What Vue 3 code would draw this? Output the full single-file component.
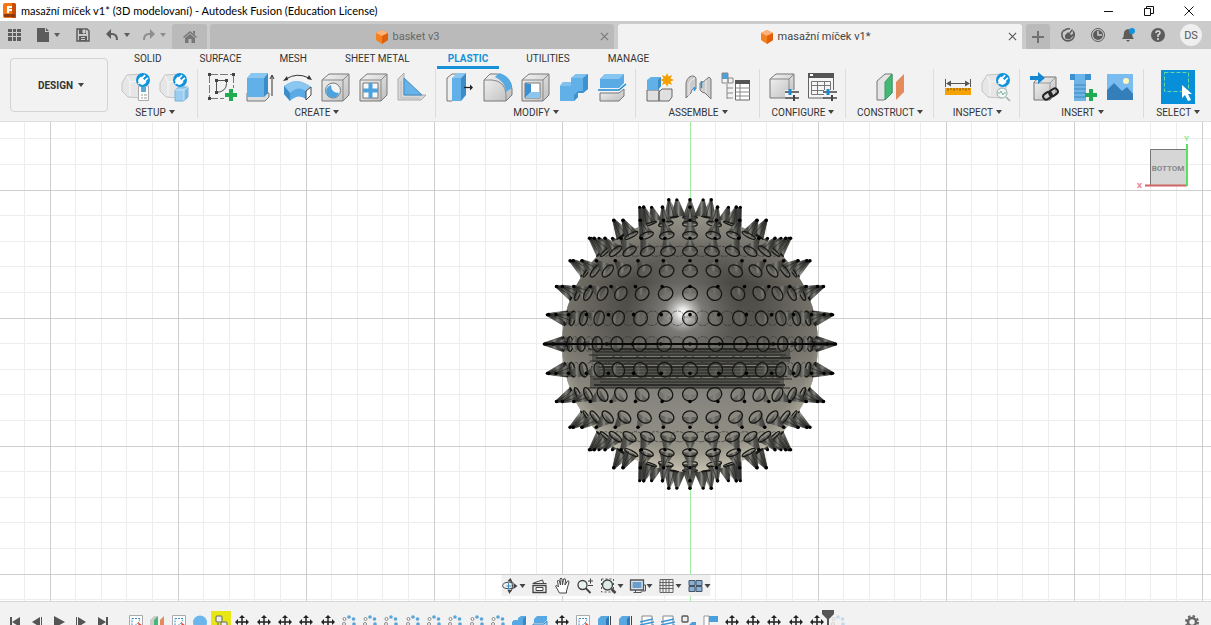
<script setup>
const ribbonTabs = ['SOLID', 'SURFACE', 'MESH', 'SHEET METAL', 'PLASTIC', 'UTILITIES', 'MANAGE']

const groups = [
  { label: 'SETUP', tools: ['setup-doc', 'setup-cube'] },
  { label: 'CREATE', tools: ['sketch', 'extrude', 'sweep', 'hole', 'lattice', 'rib'] },
  { label: 'MODIFY', tools: ['press', 'fillet', 'shell', 'combine', 'split'] },
  { label: 'ASSEMBLE', tools: ['component', 'joint', 'table-tree'] },
  { label: 'CONFIGURE', tools: ['config', 'config-table'] },
  { label: 'CONSTRUCT', tools: ['planes'] },
  { label: 'INSPECT', tools: ['ruler', 'analyse'] },
  { label: 'INSERT', tools: ['derive', 'bolt', 'image'] },
  { label: 'SELECT', tools: ['select'] },
]

const navTools = [
  { id: 'orbit', menu: true },
  { id: 'look' },
  { id: 'pan' },
  { id: 'zoom' },
  { id: 'fit', menu: true },
  { id: 'display', menu: true },
  { id: 'grid', menu: true },
  { id: 'views', menu: true },
]

const player = ['first', 'prev', 'play', 'next', 'last']
const timeline = [
  't-sketch', 't-planes', 't-sketch', 't-sphere', 't-joint',
  ...Array(5).fill('t-move'),
  ...Array(8).fill('t-pattern'),
  't-combine', 't-split', 't-move', 't-sketch', 't-extrude', 't-extrude',
  't-thread', 't-thread', 't-link', 't-flag',
  ...Array(5).fill('t-move'),
]

// Canvas grid, centred on the green axis
const CX = 690
const CY = 344
const vLines = []
const hLines = []
for (let k = -40; k <= 40; k++) {
  vLines.push({ p: Math.floor(CX + k * 25.6) + 0.5, major: k % 5 === 0 })
  hLines.push({ p: Math.floor(318 + k * 25.6) + 0.5, major: k % 5 === 0 })
}

// Spiky ball: rings of cones at equal latitude steps
const R = 128
const TIP = 146
const BASE = 7.4
const STEP = (11.6 * Math.PI) / 180
const perRing = [31, 31, 30, 28, 25, 18, 11, 5]
const spikes = []
for (let ring = -7; ring <= 7; ring++) {
  const n = perRing[Math.abs(ring)]
  const lat = ring * STEP
  for (let i = 0; i < n; i++) {
    const lon = (i * 2 * Math.PI) / n
    const x = Math.cos(lat) * Math.sin(lon)
    const y = -Math.sin(lat)
    const z = Math.cos(lat) * Math.cos(lon)
    const d = Math.hypot(x, y) || 1
    const ux = d > 0.001 ? x / d : 1
    const uy = d > 0.001 ? y / d : 0
    const bx = CX + R * x
    const by = CY + R * y
    const tx = CX + TIP * x
    const ty = CY + TIP * y
    const pt = (px, py, s) => (px - uy * s).toFixed(1) + ',' + (py + ux * s).toFixed(1)
    spikes.push({
      z, bx, by, tx, ty, ring,
      rx: BASE * Math.max(Math.abs(z), 0.06),
      rot: (Math.atan2(uy, ux) * 180) / Math.PI,
      poly: [pt(bx, by, BASE), pt(tx, ty, 1.2), pt(tx, ty, -1.2), pt(bx, by, -BASE)].join(' '),
      seam: `M${pt(bx, by, 3)}L${pt(tx, ty, 0)}L${pt(bx, by, -3)}`,
      front: z > -0.02,
    })
  }
}
spikes.sort((a, b) => a.z - b.z)
const back = spikes.filter((s) => !s.front)
const front = spikes.filter((s) => s.front)
const ghosts = back.filter((s) => [0, 1, 4].includes(Math.abs(s.ring)))
const coneOpacity = (z) => (z > 0.85 ? 0.3 : z > 0.7 ? 0.6 : 0.9)

const bands = Array.from({ length: 14 }, (_, i) => ({
  y: 349 + i * 3,
  x1: 588 + ((i * 7) % 13),
  x2: 776 + ((i * 5) % 17),
  w: i % 3 === 0 ? 1.6 : 0.9,
}))
</script>

<template>
  <div class="app">
    <svg class="defs" aria-hidden="true">
      <defs>
        <linearGradient id="grey" x1="0" y1="0" x2="1" y2="1"><stop offset="0" stop-color="#f4f4f4" /><stop offset="1" stop-color="#bdbdbd" /></linearGradient>
        <g id="plug"><circle r="7" fill="#0f93dc" /><g transform="rotate(45)"><path d="M-4 1a4 4 0 0 0 8 0v-2h-8zM-2.800-5h1.700v4h-1.700zM1.100-5h1.700v4h-1.700z" fill="#fff" /></g><path d="M-5 4l3-2" stroke="#fff" stroke-width="1.500" /></g>
        <g id="blob"><path d="M1 11L6 3l15-1 4 4v16l-5 4-13-1-6-6z" fill="#e6e6e6" stroke="#c4c4c4" /><path d="M6 4l3 6v14M9 10l15-2" fill="none" stroke="#f8f8f8" /></g>
        <symbol id="setup-doc" viewBox="0 0 30 30"><use href="#blob" /><path d="M17.500 14h10v14.500h-10z" fill="#fff" stroke="#aaa" /><path d="M20 15h5v5h-5z" fill="#58a8de" /><path d="M20 23h2m1 0h3m-6 3h2m1 0h3" stroke="#999" /><use href="#plug" x="22" y="8" /></symbol>
        <symbol id="setup-cube" viewBox="0 0 30 30"><use href="#blob" /><path d="M16 18l4-3h9v10l-4 4h-9z" fill="#9bcdf1" stroke="#7fb2d8" /><path d="M25 18l4-3v10l-4 4z" fill="#7db9e5" /><path d="M16 18h9v11m0-11l4-3" fill="none" stroke="#cfe7f8" /><use href="#plug" x="21" y="8" /></symbol>
        <symbol id="sketch" viewBox="0 0 30 30"><path d="M3 2.500h24M2.500 3v24M26.500 3v13M3 26.500h14" fill="none" stroke="#777" stroke-dasharray="8 2" /><path d="M9.500 8.500h10v3q0 8-10 9z" fill="none" stroke="#555" /><path d="M1 1h3v3H1zM25 1h3v3h-3zM1 25h3v3H1zM8 7h3v3H8zM18 7h3v3h-3zM8 19h3v3H8z" fill="#444" /><path d="M22 17h4v4h4v4h-4v4h-4v-4h-4v-4h4z" fill="#1fab50" /></symbol>
        <symbol id="extrude" viewBox="0 0 30 30"><path d="M2 25v4h18l4-4v-4H2z" fill="#ddd" stroke="#777" /><path d="M2 6h17v19H2z" fill="#62b0e8" /><path d="M2 6l4-5h17l-4 5z" fill="#8bc6f0" /><path d="M19 6l4-5v20l-4 4z" fill="#3b8dca" /><path d="M27 24V4m-2 3l2-4 2 4" fill="none" stroke="#333" /></symbol>
        <symbol id="sweep" viewBox="0 0 30 30"><path d="M1 14q13-10 27 1l-5 4v8q-8-6-16 2L1 22z" fill="#5aaae5" /><path d="M1 14q13-10 27 1l-5 4q-8-6-16 2z" fill="#8bc6f0" /><path d="M1 14l6 7v8l-6-7z" fill="#3b8dca" /><path d="M23 19l5-4v8l-5 5z" fill="#fff" stroke="#444" /><path d="M3 7q11-7 23-1" fill="none" stroke="#333" /><path d="M0 9l4-5 1 4zM29 8l-5-1 2-4z" fill="#333" /></symbol>
        <symbol id="box" viewBox="0 0 30 30"><path d="M1 8l7-6h20v21l-6 6H1z" fill="url(#grey)" stroke="#777" /><path d="M1 8h21v21m0-21l6-6" fill="none" stroke="#888" /></symbol>
        <symbol id="hole" viewBox="0 0 30 30"><use href="#box" /><circle cx="12" cy="18.500" r="7.500" fill="#f4f4f4" stroke="#777" /><path d="M10 13a6.500 6.500 0 1 0 8 8q-8 0-8-8z" fill="#4da3e0" /></symbol>
        <symbol id="lattice" viewBox="0 0 30 30"><use href="#box" /><path d="M4 11h15v15H4z" fill="#f8f8f8" stroke="#777" /><path d="M9.500 11h4v5.500H19v4h-5.500V26h-4v-5.500H4v-4h5.500z" fill="#4da3e0" /></symbol>
        <symbol id="rib" viewBox="0 0 30 30"><path d="M1 7l6-6v22h22l-5 5H1z" fill="#d9d9d9" stroke="#aaa" /><path d="M7 6l18 17H7z" fill="#67b3ea" stroke="#438dc4" /><path d="M4 9v17h19" fill="none" stroke="#bbb" /></symbol>
        <symbol id="press" viewBox="0 0 30 30"><path d="M2 6l5-4h5v22l-5 5H2z" fill="#eee" stroke="#777" /><path d="M7 6h9v23H7z" fill="#62b0e8" /><path d="M7 6l5-5h9l-5 5z" fill="#8bc6f0" /><path d="M16 6l5-5v22l-5 6z" fill="#3b8dca" /><path d="M19 15.500h7" stroke="#222" stroke-width="1.300" /><path d="M25 12.500l3 3-3 3z" fill="#222" /></symbol>
        <symbol id="fillet" viewBox="0 0 30 30"><path d="M1 8l6-6h7q14 2 15 15v6l-6 6H1z" fill="url(#grey)" stroke="#777" /><path d="M1 8h8q13 1 14 14v7" fill="none" stroke="#888" /><path d="M12 5l4-4q12 3 13 15l-6 4Q22 9 12 5z" fill="#57a9e4" /></symbol>
        <symbol id="shell" viewBox="0 0 30 30"><use href="#box" /><path d="M4 11h15v15H4z" fill="#fff" stroke="#777" /><path d="M4 11l6 1v8l-6 6z" fill="#3a90d0" /><path d="M4 26l6-6h9v6z" fill="#8bc6f0" /></symbol>
        <symbol id="combine" viewBox="0 0 30 30"><path d="M1 14l3-4h8V6l5-4h12v15l-5 4h-5v4l-4 4H1z" fill="#62b0e8" /><path d="M12 6l5-4h12l-5 4zM1 14l3-4h8v4z" fill="#82c0ee" /><path d="M24 6l5-4v15l-5 4h-5v4l-4 4v-6l4-4h5z" fill="#3f92d0" /></symbol>
        <symbol id="split" viewBox="0 0 30 30"><path d="M3 7l5-5h19v9l-5 5H3z" fill="#5aaae5" /><path d="M3 7l5-5h19l-5 5z" fill="#88c5f0" /><path d="M1 18h21l7-6" fill="none" stroke="#1989d2" stroke-width="1.500" /><path d="M3 21h19l5-4v7l-5 5H3z" fill="url(#grey)" stroke="#777" /></symbol>
        <symbol id="component" viewBox="0 0 30 30"><path d="M2 18h12v11H2zM14 20l3-3h10v8l-3 4H14z" fill="#e0e0e0" stroke="#666" /><path d="M2 18V8l4-3h10v9l-3 4z" fill="#62b0e8" /><path d="M13 8l3-3v9l-3 4z" fill="#3b8dca" /><path d="M22 1l1.500 3.500L27 3l-1.500 3.500L29 8l-3.500 1.500L27 13l-3.500-1.500L22 15l-1.500-3.500L17 13l1.500-3.500L15 8l3.500-1.500L17 3l3.500 1.500z" fill="#f5a000" /></symbol>
        <symbol id="joint" viewBox="0 0 30 30"><path d="M3 11q2-8 8-7l2 2v11q-4-2-5 4l-5 5z" fill="#ccc" stroke="#777" /><path d="M6 24V12q1-4 6-6" fill="none" stroke="#eee" /><path d="M17 11l3-1 6-5 2 2v20l-6-6q-3 0-5-3z" fill="#ccc" stroke="#777" /><path d="M23 8v13" stroke="#eee" /><path d="M11.500 15v4m7-10v7" stroke="#2a91d7" stroke-width="1.500" /></symbol>
        <symbol id="table-tree" viewBox="0 0 30 30"><path d="M1 1h6v6H1z" fill="#4a9fde" /><path d="M1 1h6v10H1zM7 6h5v5H7zM6 12v15m0-11h6m-6 5h6m-6 5h6" fill="none" stroke="#888" /><path d="M14.500 9h14v19h-14z" fill="#fff" stroke="#666" /><path d="M14 8h15v4H14z" fill="#555" /><path d="M15 16h14m-14 4h14m-14 4h14M19 12v16" stroke="#888" /></symbol>
        <g id="slider"><path d="M16 20h14M16 26h14" stroke="#444" stroke-width="1.500" /><path d="M21 17v6" stroke="#1989d2" stroke-width="3" /><path d="M25 23v6" stroke="#444" stroke-width="2" /></g>
        <symbol id="config" viewBox="0 0 30 30"><path d="M1 7l6-5h18v20l-5 4H1z" fill="url(#grey)" stroke="#777" /><path d="M1 7h19v19m0-19l5-5" fill="none" stroke="#888" /><path d="M16 18h14v11H16z" fill="#f2f2f2" /><use href="#slider" /></symbol>
        <symbol id="config-table" viewBox="0 0 30 30"><path d="M1.500 2h25v24h-25z" fill="#f5f5f5" stroke="#666" /><path d="M1 1h26v5H1z" fill="#555" /><path d="M3 2h3v2H3z" fill="#fff" /><path d="M4.500 9.500h19v13h-19zM5 13.500h18M5 18.500h18M10.500 10v12m7-12v12" fill="none" stroke="#777" /><path d="M17 18h13v11H17z" fill="#f2f2f2" /><use href="#slider" /></symbol>
        <symbol id="planes" viewBox="0 0 30 30"><path d="M2 9l8-7h7v19l-8 7H2z" fill="#e4e4e4" stroke="#777" /><path d="M10 10l7-8v19l-7 7z" fill="#45b875" stroke="#349c60" /><path d="M21 10l8-8v18l-8 8z" fill="#e48a5d" /></symbol>
        <symbol id="ruler" viewBox="0 0 30 30"><path d="M2 16h26v7H2z" fill="#f5a300" /><path d="M5 16v3m3-3v2m3-2v3m3-3v2m3-2v3m3-3v2m3-2v3m3-3v2" stroke="#845300" /><path d="M2.500 7v8M27.500 7v8M5 11.500h20" stroke="#555" /><path d="M3 11.500l5-3v6zM27 11.500l-5-3v6z" fill="#555" /></symbol>
        <symbol id="analyse" viewBox="0 0 30 30"><use href="#blob" /><circle cx="21" cy="21" r="5" fill="#f3f8f5" stroke="#9aa" /><path d="M17 21h2l1-2 2 4 1-2h2" fill="none" stroke="#7bb99c" /><path d="M25 25l4 4" stroke="#9aa" stroke-width="1.500" /><use href="#plug" x="22" y="8" /></symbol>
        <symbol id="derive" viewBox="0 0 30 30"><path d="M5 10l6-5h16v16l-6 7H5z" fill="url(#grey)" stroke="#777" /><path d="M5 11h16v16m0-16l6-6" fill="none" stroke="#999" /><path d="M1 4h8V0l7 6-7 6V8H1z" fill="#1688d2" /><g fill="none" stroke="#222" stroke-width="2"><rect x="14" y="21" width="9" height="6" rx="3" transform="rotate(-35 18 24)" /><rect x="20" y="17" width="9" height="6" rx="3" transform="rotate(-35 25 20)" /></g></symbol>
        <symbol id="bolt" viewBox="0 0 30 30"><path d="M3 2h21v6H3z" fill="#3e91cf" /><path d="M8 2h10v6H8z" fill="#69b5eb" /><path d="M7 8h12v21H7z" fill="#6fb4e5" /><path d="M7 13h12M7 17h12M7 21h12M7 25h12" stroke="#3d88bd" /><path d="M22 17h4v4h4v4h-4v4h-4v-4h-4v-4h4z" fill="#1fab50" /></symbol>
        <symbol id="image" viewBox="0 0 30 30"><path d="M2 2h26v26H2z" fill="#7abcf0" /><path d="M2 18l7-7 8 8 5-4 6 7v6H2z" fill="#347fb9" /><circle cx="21" cy="9" r="3" fill="#fff5bd" /></symbol>
        <symbol id="select" viewBox="0 0 34 34"><path d="M0 0h34v34H0z" fill="#088fda" /><path d="M3.500 2.500h24v19h-24z" fill="none" stroke="#69d7a1" stroke-dasharray="4 2" /><path d="M21 15v13l3-3 3 6 3-1-3-6h4z" fill="#fff" /></symbol>

        <symbol id="orbit" viewBox="0 0 18 18"><path d="M12 6q-5-2-9 0-4 3 0 5 4 2 9 0" fill="none" stroke="#444" /><path d="M9 3q4 6 0 12" fill="none" stroke="#445" /><path d="M7 6v6M5 9h5" stroke="#388bbf" /><path d="M6 4l3-3 2 4zM6 13l4 0-2 4zM12 6l4 3-4 3z" fill="#444" /></symbol>
        <symbol id="look" viewBox="0 0 18 18"><path d="M2.500 8.500h13v7h-13z" fill="#eee" stroke="#444" stroke-width="1.300" /><path d="M5.500 10.500h7v3h-7z" fill="#fff" stroke="#444" /><path d="M3 6l9-3 1 3M2 6.500h14" fill="none" stroke="#444" /></symbol>
        <symbol id="pan" viewBox="0 0 18 18"><path d="M6 16L2 9q1-2 3 1L4 4q1-2 2 0l1 4-.5-6q1-2 2 0L9 8l1-6q2-1 2 1l-.5 5L14 4q1-1 1.500 1L13 14v2z" fill="#fff" stroke="#444" /></symbol>
        <symbol id="zoom" viewBox="0 0 18 18"><circle cx="6" cy="8" r="4.500" fill="#e9f2f2" stroke="#444" stroke-width="1.300" /><path d="M9 11l5 5" stroke="#444" stroke-width="2" /><path d="M11.500 4h5m-2.500-2.500v5M11.500 8.500h5" stroke="#444" /></symbol>
        <symbol id="fit" viewBox="0 0 18 18"><path d="M2 2h12v13H2z" fill="none" stroke="#555" stroke-dasharray="2 2" /><circle cx="8" cy="8" r="5" fill="#dceaea" stroke="#444" stroke-width="1.300" /><path d="M12 12l4 4" stroke="#444" stroke-width="2.500" /></symbol>
        <symbol id="display" viewBox="0 0 18 18"><path d="M2 3h13v10H2z" fill="#d7e4ee" stroke="#555" stroke-width="1.300" /><path d="M4 5h9v6H4z" fill="#6d9dcc" /><path d="M7 13v2M5 15.500h8M15 8h2v6h-5" fill="none" stroke="#555" /></symbol>
        <symbol id="grid" viewBox="0 0 18 18"><path d="M2.500 2.500h13v13h-13zM2 5.500h14M2 8.500h14M2 11.500h14M5.500 2v14M8.500 2v14M11.500 2v14" fill="#eee" stroke="#666" /></symbol>
        <symbol id="views" viewBox="0 0 18 18"><path d="M2.500 3.500h6v5h-6zM9.500 3.500h6v5h-6zM2.500 9.500h6v5h-6zM9.500 9.500h6v5h-6z" fill="#8daed3" stroke="#456" /></symbol>

        <symbol id="first" viewBox="0 0 16 16"><path d="M3 3h2v10H3zM13 3v10L5 8z" fill="#555" /></symbol>
        <symbol id="prev" viewBox="0 0 16 16"><path d="M11 3v10L3 8zM12 3h1v10h-1z" fill="#555" /></symbol>
        <symbol id="play" viewBox="0 0 16 16"><path d="M3 2l11 6-11 6z" fill="#555" /></symbol>
        <symbol id="next" viewBox="0 0 16 16"><path d="M5 3v10l8-5zM3 3h1v10H3z" fill="#555" /></symbol>
        <symbol id="last" viewBox="0 0 16 16"><path d="M11 3h2v10h-2zM3 3v10l8-5z" fill="#555" /></symbol>
        <symbol id="t-sketch" viewBox="0 0 16 16"><path d="M1.500 1.500h13v13h-13z" fill="#fff" stroke="#aaa" /><path d="M4 4.500h8q-1 6-8 8z" fill="none" stroke="#3d8ec6" stroke-dasharray="2 1" /><path d="M10 8l5 4-4 2z" fill="#e43" /></symbol>
        <symbol id="t-planes" viewBox="0 0 16 16"><path d="M1 6l4-4h3v10l-3 3H1z" fill="#ccc" /><path d="M5 6l4-4v10l-4 3z" fill="#45b875" /><path d="M11 6l4-4v10l-4 3z" fill="#e48a5d" /></symbol>
        <symbol id="t-sphere" viewBox="0 0 16 16"><circle cx="8" cy="8.500" r="7" fill="#6bb7ed" /></symbol>
        <symbol id="t-joint" viewBox="0 0 16 16"><rect x="3" y="2" width="6" height="6" rx="1" fill="#eee" stroke="#666" /><rect x="8" y="8" width="6" height="6" rx="1" fill="#eee" stroke="#666" /><path d="M5 9v4h3" fill="none" stroke="#666" /></symbol>
        <symbol id="t-link" viewBox="0 0 16 16"><rect x="1" y="2" width="6" height="6" rx="1" fill="#eee" stroke="#555" stroke-width="1.300" /><path d="M8 11l3-3h4v7H8z" fill="#4a9fde" /></symbol>
        <symbol id="t-move" viewBox="0 0 16 16"><path d="M8 3v10M3 8h10" stroke="#222" stroke-width="1.500" /><path d="M8 1l3 3H5zM8 15l3-3H5zM1 8l3-3v6zM15 8l-3-3v6z" fill="#222" /></symbol>
        <symbol id="t-pattern" viewBox="0 0 16 16"><g fill="#5aa4d8"><circle cx="8" cy="3" r="1.800" /><circle cx="12.500" cy="5" r="1.800" /><circle cx="13" cy="10" r="1.800" /><circle cx="8" cy="13" r="1.800" /></g><circle cx="3.500" cy="5" r="1.500" fill="#fff" stroke="#888" /><circle cx="3" cy="10" r="1.500" fill="#fff" stroke="#888" /></symbol>
        <symbol id="t-combine" viewBox="0 0 16 16"><path d="M1 8l2-2h4V4l3-2h5v8l-3 5H1z" fill="#57a8e3" /><path d="M12 5l3-3v8l-3 5z" fill="#3888c6" /></symbol>
        <symbol id="t-split" viewBox="0 0 16 16"><path d="M2 5l3-3h10v4l-3 3H2z" fill="#57a8e3" /><path d="M1 10h11l3-3v5l-3 3H1z" fill="#a9d2ef" stroke="#3b8dca" /></symbol>
        <symbol id="t-extrude" viewBox="0 0 16 16"><path d="M2 5l3-3h8v10l-3 3H2z" fill="#57a8e3" /><path d="M10 5l3-3v10l-3 3z" fill="#3178b4" /><path d="M14.500 2v12" stroke="#444" /></symbol>
        <symbol id="t-thread" viewBox="0 0 16 16"><path d="M3 2h10v13H3z" fill="#fff" stroke="#888" /><path d="M1 8l13-3M1 11l14-3M1 14l14-3" stroke="#3d96d6" stroke-width="1.500" /></symbol>
        <symbol id="t-flag" viewBox="0 0 16 16"><path d="M1 2h5v13H1z" fill="#fff" stroke="#999" /><path d="M6 2h9v6H6z" fill="#4a9fde" /></symbol>
        <symbol id="part" viewBox="0 0 14 14"><path d="M7 0l6 3v7l-6 4-6-4V3z" fill="#f58020" /><path d="M7 0l6 3-6 3-6-3z" fill="#ffb277" /><path d="M7 6l6-3v7l-6 4z" fill="#e1600a" /></symbol>
        <symbol id="gear" viewBox="0 0 16 16"><circle cx="8" cy="8" r="4" fill="none" stroke="#666" stroke-width="2.500" /><circle cx="8" cy="8" r="6" fill="none" stroke="#666" stroke-width="2" stroke-dasharray="2.400 2.300" /></symbol>
      </defs>
    </svg>

    <header class="title">
      <svg class="logo" viewBox="0 0 14 16"><rect width="13" height="15" rx="2" fill="#f47712" /><path d="M9 0h2q2 0 2 2v13H9z" fill="#c94d05" /><path d="M4 3h5v2H6v1h3v2H6v2H4z" fill="#fff" /><path d="M1 11h11v3H1z" fill="#8d3909" /></svg>
      <span class="name">masažní míček v1* (3D modelovaní) - Autodesk Fusion (Education License)</span>
      <button class="win" aria-label="Minimize"><svg viewBox="0 0 12 12"><path d="M1 6.500h9" stroke="#111" /></svg></button>
      <button class="win" aria-label="Restore"><svg viewBox="0 0 12 12"><path d="M1.500 3.500h6v7h-6zM3.500 3V1.500h7v7H8" fill="none" stroke="#111" /></svg></button>
      <button class="win" aria-label="Close"><svg viewBox="0 0 12 12"><path d="M1.500 1.500l9 9m0-9l-9 9" stroke="#111" /></svg></button>
    </header>

    <div class="docbar">
      <div class="quick">
        <button aria-label="Data panel"><svg viewBox="0 0 14 14" width="14" height="14"><path d="M0 1h4v3H0zM5 1h3v3H5zM9 1h4v3H9zM0 5h4v3H0zM5 5h3v3H5zM9 5h4v3H9zM0 9h4v4H0zM5 9h3v4H5zM9 9h4v4H9z" fill="#5c5c5c" /></svg></button>
        <button class="file" aria-label="File"><svg viewBox="0 0 13 14" width="13" height="14"><path d="M0 0h8v4h4v10H0zM9 0l3 3H9z" fill="#5c5c5c" /></svg><i class="caret"></i></button>
        <button class="save" aria-label="Save"><svg viewBox="0 0 14 14" width="14" height="14"><path d="M1 1h10l2 2v10H1z" fill="none" stroke="#5c5c5c" stroke-width="1.500" /><path d="M3 1h7v5H3zM3 8h8v5H3z" fill="#5c5c5c" /><path d="M7 2h2v3H7zM5 9.500h4M5 11.500h4" stroke="#ccc" fill="#ccc" /></svg></button>
        <button class="undo" aria-label="Undo"><svg viewBox="0 0 13 12" width="13" height="12"><path d="M3 5h3q5 0 5 6" fill="none" stroke="#5c5c5c" stroke-width="2" /><path d="M0 5l5-5v10z" fill="#5c5c5c" /></svg><i class="caret"></i></button>
        <button class="redo" aria-label="Redo"><svg viewBox="0 0 13 12" width="13" height="12"><path d="M10 5H7q-5 0-5 6" fill="none" stroke="#8e8e8e" stroke-width="2" /><path d="M13 5L8 0v10z" fill="#8e8e8e" /></svg><i class="caret"></i></button>
      </div>
      <button class="home" aria-label="Home"><svg viewBox="0 0 14 12" width="14" height="12"><path d="M7 0l7 6-1 1-6-5-6 5-1-1zM2 7l5-4 5 4v5H8.500V8h-3v4H2zM10 0h2v4l-2-2z" fill="#777" /></svg></button>
      <div class="doc">
        <button class="doc-name"><svg width="14" height="14"><use href="#part" /></svg>basket v3</button>
        <button class="close" aria-label="Close basket"><svg viewBox="0 0 10 10" width="9" height="9"><path d="M1 1l8 8m0-8L1 9" stroke="#777" stroke-width="1.200" /></svg></button>
      </div>
      <div class="doc active">
        <button class="doc-name"><svg width="14" height="14"><use href="#part" /></svg>masažní míček v1*</button>
        <button class="close" aria-label="Close document"><svg viewBox="0 0 10 10" width="9" height="9"><path d="M1 1l8 8m0-8L1 9" stroke="#555" stroke-width="1.200" /></svg></button>
      </div>
      <button class="add" aria-label="New design"><svg viewBox="0 0 12 12" width="12" height="12"><path d="M6 0v12M0 6h12" stroke="#707070" stroke-width="2" /></svg></button>
      <div class="status">
        <button aria-label="Extensions"><svg viewBox="0 0 16 16" width="16" height="16"><path d="M4 3a6.200 6.200 0 1 0 9 1" fill="none" stroke="#5c5c5c" stroke-width="1.600" /><path d="M4 4a6 6 0 0 1 6-2" fill="none" stroke="#5c5c5c" stroke-width="1.600" /><path d="M5 8l3-3 1 1 3-4 1 1-3 4 1 1 3-2 1 1-5 5q-3 1-5-1z" fill="#5c5c5c" /></svg></button>
        <button aria-label="Job status"><svg viewBox="0 0 16 16" width="16" height="16"><circle cx="8" cy="8" r="6.500" fill="none" stroke="#5c5c5c" /><circle cx="8" cy="8" r="5" fill="#5c5c5c" /><path d="M8 4v4h4" fill="none" stroke="#ccc" stroke-width="1.500" /></svg></button>
        <button aria-label="Notifications"><svg viewBox="0 0 16 16" width="16" height="16"><path d="M2 12q2-2 2-6 0-3 4-4 4 1 4 4 0 4 2 6zM6 13h4l-2 2z" fill="#5c5c5c" /><circle cx="12" cy="4" r="3" fill="#1493dc" /></svg></button>
        <button aria-label="Help"><svg viewBox="0 0 16 16" width="16" height="16"><circle cx="8" cy="8" r="7" fill="#5c5c5c" /><path d="M6 6q0-2 2-2t2 2q0 1-2 2v2m0 1v2" fill="none" stroke="#ddd" stroke-width="1.500" /></svg></button>
        <button class="avatar">DS</button>
      </div>
    </div>

    <section class="ribbon">
      <button class="workspace">DESIGN<i class="caret"></i></button>
      <div class="ribbon-main">
        <nav class="tabs">
          <button v-for="t in ribbonTabs" :key="t" :class="{ on: t === 'PLASTIC' }">{{ t }}</button>
        </nav>
        <div class="groups">
          <div v-for="g in groups" :key="g.label" class="group">
            <div class="tools">
              <button v-for="id in g.tools" :key="id" :aria-label="id" :class="{ big: id === 'select' }"><svg><use :href="'#' + id" /></svg></button>
            </div>
            <button class="label">{{ g.label }}<i class="caret"></i></button>
          </div>
        </div>
      </div>
    </section>

    <main class="canvas">
      <svg class="scene" viewBox="0 122 1211 479" preserveAspectRatio="xMidYMid slice">
        <defs>
          <linearGradient id="skin" x1="0" y1="0" x2="0" y2="1">
            <stop offset="0" stop-color="#9a978c" /><stop offset="0.120" stop-color="#6b6963" /><stop offset="0.260" stop-color="#4b4944" /><stop offset="0.480" stop-color="#5a5853" /><stop offset="0.700" stop-color="#85847d" /><stop offset="0.860" stop-color="#8f8d85" /><stop offset="1" stop-color="#c2bdad" />
          </linearGradient>
          <radialGradient id="rim" cx="0.500" cy="0.420" r="0.600"><stop offset="0.450" stop-color="#8a887e" stop-opacity="0" /><stop offset="0.820" stop-color="#8f8c80" stop-opacity="0.600" /><stop offset="1" stop-color="#d5cfbd" stop-opacity="0.950" /></radialGradient>
          <radialGradient id="shine"><stop offset="0" stop-color="#fff" /><stop offset="0.250" stop-color="#fff" stop-opacity="0.800" /><stop offset="1" stop-color="#bbb" stop-opacity="0" /></radialGradient>
          <linearGradient id="cone"><stop offset="0" stop-color="#2f2f2e" /><stop offset="0.350" stop-color="#4c4c49" /><stop offset="0.500" stop-color="#85857f" /><stop offset="0.650" stop-color="#4c4c49" /><stop offset="1" stop-color="#2c2c2b" /></linearGradient>
        </defs>
        <g stroke="#ededed">
          <template v-for="l in vLines" :key="'v' + l.p"><path v-if="!l.major" :d="`M${l.p} 0V900`" /></template>
          <template v-for="l in hLines" :key="'h' + l.p"><path v-if="!l.major" :d="`M-400 ${l.p}H1700`" /></template>
        </g>
        <g stroke="#cecece">
          <template v-for="l in vLines" :key="'V' + l.p"><path v-if="l.major" :d="`M${l.p} 0V900`" /></template>
          <template v-for="l in hLines" :key="'H' + l.p"><path v-if="l.major" :d="`M-400 ${l.p}H1700`" /></template>
        </g>
        <path d="M690.500 0V900" stroke="#a2eba2" />

        <g v-for="(s, i) in back" :key="'b' + i">
          <polygon :points="s.poly" fill="url(#cone)" stroke="#333" stroke-width="0.500" />
          <circle :cx="s.tx" :cy="s.ty" r="1.500" />
        </g>
        <circle :cx="CX" :cy="CY" :r="R" fill="url(#skin)" />
        <circle :cx="CX" :cy="CY" :r="R" fill="url(#rim)" />
        <circle cx="683" cy="311" r="56" fill="url(#shine)" opacity="0.350" />
        <circle cx="683" cy="313" r="20" fill="url(#shine)" />
        <path d="M592 348H790V362H784V388H590V374H598V362H592z" fill="#4a4945" opacity="0.750" />
        <path v-for="b in bands" :key="b.y" :d="`M${b.x1} ${b.y}H${b.x2}`" stroke="#1f1f1e" :stroke-width="b.w" />
        <path d="M598 356.500H782M600 365.500H778M606 377.500H776" stroke="#8a8981" stroke-width="0.800" stroke-dasharray="14 3 5 2" />
        <ellipse v-for="(s, i) in ghosts" :key="'g' + i" :rx="s.rx" :ry="BASE" :transform="`translate(${s.bx} ${s.by}) rotate(${s.rot})`" fill="none" stroke="#222" stroke-width="0.700" stroke-dasharray="3 1" opacity="0.700" />
        <g v-for="(s, i) in front" :key="'f' + i">
          <polygon :points="s.poly" fill="url(#cone)" :opacity="coneOpacity(s.z)" />
          <path v-if="s.z < 0.5" :d="s.seam" fill="none" stroke="#1c1c1b" stroke-width="0.600" />
          <ellipse :rx="s.rx" :ry="BASE" :transform="`translate(${s.bx} ${s.by}) rotate(${s.rot})`" fill="#88877f" fill-opacity="0.200" stroke="#171716" stroke-width="1.300" />
          <circle :cx="s.tx" :cy="s.ty" r="1.800" />
        </g>
        <path d="M544 344H836" stroke="#080808" stroke-width="2" />
      </svg>

      <svg class="cube" viewBox="0 0 56 60" role="img" aria-label="View cube">
        <path d="M15.500 17.500h36v36h-36z" fill="#d6d6d6" stroke="#777" />
        <text x="33" y="39" text-anchor="middle" class="cube-text">BOTTOM</text>
        <path d="M10 53.500H52" stroke="#d06565" stroke-width="2" />
        <path d="M52 12v42" stroke="#5fe05f" stroke-width="2" />
        <text x="2" y="56" class="axis-x">X</text>
        <text x="49" y="9" class="axis-y">Y</text>
      </svg>

      <div class="nav">
        <button v-for="n in navTools" :key="n.id" :aria-label="n.id"><svg><use :href="'#' + n.id" /></svg><i v-if="n.menu" class="caret"></i></button>
      </div>
    </main>

    <footer class="timeline">
      <div class="player">
        <button v-for="p in player" :key="p" :aria-label="p"><svg><use :href="'#' + p" /></svg></button>
      </div>
      <div class="history">
        <button v-for="(t, i) in timeline" :key="i" :class="{ hot: t === 't-joint' }" :aria-label="t"><svg><use :href="'#' + t" /></svg></button>
        <svg class="marker" viewBox="0 0 12 20"><path d="M0 0h12v4L7 9v11H5V9L0 4z" fill="#555" /></svg>
      </div>
      <button class="pending" aria-label="Pending feature"><svg><use href="#t-pattern" /></svg></button>
      <button class="settings" aria-label="Settings"><svg><use href="#gear" /></svg></button>
    </footer>
  </div>
</template>

<style>
html, body { margin: 0; overflow: hidden; }
</style>

<style scoped>
.app { height: 100vh; display: flex; flex-direction: column; font-family: Roboto, "Liberation Sans", sans-serif; font-size: 10px; color: #333; background: #fff; overflow: hidden; }
.defs { position: absolute; width: 0; height: 0; }
button { border: 0; padding: 0; margin: 0; background: none; font: inherit; color: inherit; display: flex; align-items: center; justify-content: center; }
svg { display: block; flex: none; }
.caret { width: 0; height: 0; border: 3px solid transparent; border-top: 4px solid #444; border-bottom: 0; flex: none; }

.title { flex: 0 0 21px; display: flex; align-items: center; padding: 0 2px 0 3px; color: #000; }
.logo { width: 14px; height: 16px; margin-right: 4px; }
.name { flex: 1; font-family: Lato, "Open Sans", sans-serif; font-size: 11px; line-height: 20px; white-space: nowrap; }
.win { width: 40px; height: 20px; }
.win svg { width: 12px; height: 12px; }

.docbar { flex: 0 0 28px; display: flex; align-items: stretch; background: #cbcbcb; padding-top: 3px; box-sizing: border-box; font-size: 11px; }
.quick { width: 172px; display: flex; align-items: center; padding: 0 6px 4px 8px; box-sizing: border-box; }
.quick .caret { border-top-color: #5c5c5c; margin-left: 4px; }
.file { margin-left: 15px; }
.save { margin-left: 16px; }
.undo { margin-left: 16px; }
.redo { margin-left: 12px; }
.undo .caret, .redo .caret { margin-left: 5px; }
.redo .caret { border-top-color: #8e8e8e; }
.home { width: 35px; background: #bababa; border-radius: 3px 3px 0 0; margin-right: 3px; }
.doc { flex: 1; display: flex; background: #bababa; border-radius: 3px 3px 0 0; margin-right: 4px; color: #686868; }
.doc.active { background: #f2f2f2; color: #444; }
.doc-name { flex: 1; gap: 4px; white-space: nowrap; padding-left: 10px; }
.doc .close { width: 20px; }
.add { width: 24px; background: #bababa; border-radius: 3px 3px 0 0; }
.status { display: flex; align-items: center; gap: 14px; padding: 0 9px 3px 10px; }
.avatar { width: 22px; height: 22px; border-radius: 50%; background: #efefef; color: #555; }

.ribbon { flex: 0 0 73px; box-sizing: border-box; display: flex; background: #f2f2f2; border-bottom: 1px solid #dedede; }
.workspace { width: 98px; height: 54px; margin: 9px 4px 0 10px; box-sizing: border-box; border: 1px solid #d4d4d4; border-radius: 4px; font-weight: 700; gap: 5px; padding-left: 4px; }
.ribbon-main { flex: 1; min-width: 0; }
.tabs { display: flex; gap: 16px; height: 20px; margin-left: 11px; }
.tabs button { padding: 2px 11px 0; white-space: nowrap; border-bottom: 3px solid transparent; height: 20px; box-sizing: border-box; }
.tabs .on { color: #1592d8; font-weight: 700; border-color: #1592d8; }
.groups { display: flex; height: 50px; }
.group { display: flex; flex-direction: column; align-items: center; justify-content: space-between; padding: 3px 8px 0 9px; height: 46px; }
.group:not(:last-child) { border-right: 1px solid #dcdcdc; }
.group:last-child { flex: 1; }
.tools { display: flex; gap: 8px; height: 30px; align-items: center; }
.tools svg { width: 30px; height: 30px; }
.tools .big svg { width: 34px; height: 34px; }
.label { gap: 3px; padding: 0 2px; white-space: nowrap; height: 12px; }

.canvas { flex: 1; min-height: 0; position: relative; overflow: hidden; }
.scene { width: 100%; height: 100%; }
.cube { position: absolute; right: 20px; top: 10px; width: 56px; height: 60px; }
.cube-text { font: 700 8px Roboto, sans-serif; fill: #85898d; }
.axis-x { font: 700 8px Roboto, sans-serif; fill: #ee7d8c; }
.axis-y { font: 700 8px Roboto, sans-serif; fill: #8cec8c; }
.nav { position: absolute; left: 50%; bottom: 5px; transform: translateX(-50%); display: flex; align-items: center; gap: 5px; height: 21px; background: #f0f0f0; }
.nav svg { width: 18px; height: 18px; }

.timeline { flex: 0 0 24px; box-sizing: border-box; border-top: 1px solid #d8d8d8; background: #f2f2f2; display: flex; align-items: flex-start; padding: 9px 11px 0 7px; overflow: hidden; }
.timeline svg { width: 16px; height: 16px; }
.timeline button { height: 22px; }
.player { display: flex; gap: 6px; }
.history { display: flex; justify-content: space-between; width: 697px; margin-left: 17px; position: relative; }
.history button { width: 16px; }
.history .hot { background: #e8e614; box-shadow: 2px 0 #e8e614, -2px 0 #e8e614; }
.timeline .marker { position: absolute; right: -9px; top: -1px; width: 12px; height: 20px; }
.pending { margin-left: 5px; opacity: 0.3; }
.settings { margin-left: auto; }
</style>
